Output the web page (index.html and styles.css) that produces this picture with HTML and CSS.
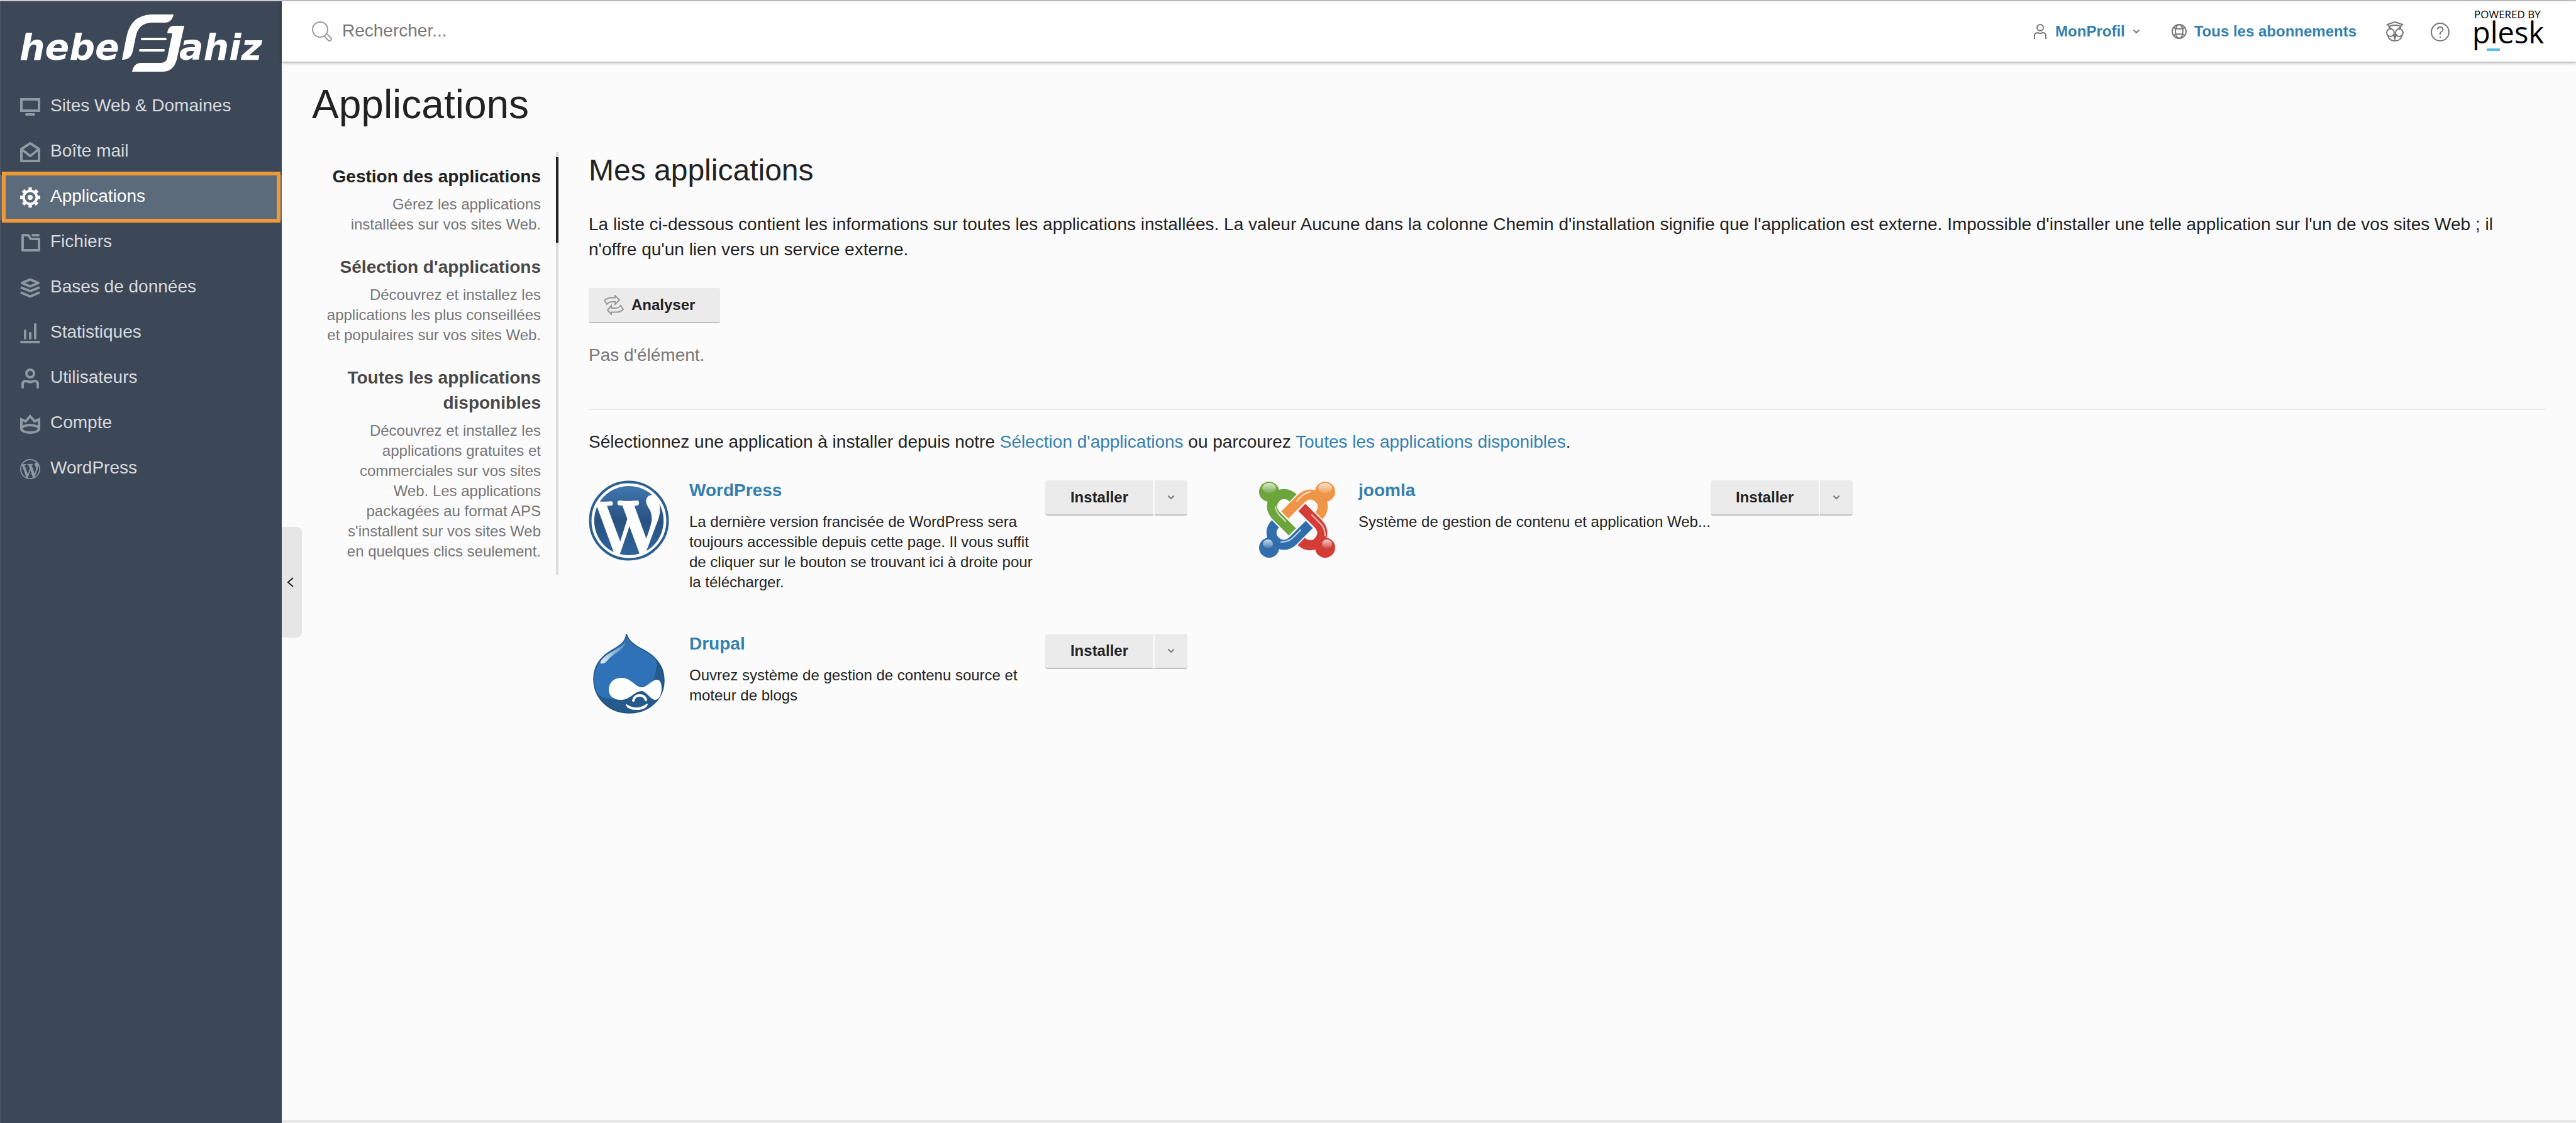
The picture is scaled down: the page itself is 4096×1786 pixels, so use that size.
FILE: index.html
```html
<!DOCTYPE html>
<html lang="fr">
<head>
  <meta charset="UTF-8">
  <title>Applications</title>
  <link rel="stylesheet" href="styles.css">
</head>
<body>
  <div class="page">
    <aside class="sidebar">
      <a class="brand" href="#">
        <svg width="448" height="132" viewBox="0 2 448 132" fill="#fff">
          <text class="brand-text" x="31" y="95">hebe</text>
          <text class="brand-text" x="285" y="95">ahiz</text>
          <path d="M194 95 L201 59 Q208 24 241 23 H276 Q273 36 262 36 H241 Q220 37 216 58 L211 82 Q208 95 194 95z"/>
          <path d="M277 41 H293 L281 95 Q276 113 260 114 H210 Q213 100 224 100 H256 Q264 100 266 92 L274 53 H266 Q267 41 277 41z"/>
          <rect x="224" y="60" width="41" height="4" rx="2"/>
          <rect x="221" y="78" width="41" height="4" rx="2"/>
        </svg>
      </a>
      <nav class="menu">
        <a class="menu-item" href="#">
          <svg class="icon" viewBox="0 0 32 32"><rect x="2" y="4" width="28" height="18"/><path d="M10 28h12" stroke-linecap="round"/></svg>
          <span>Sites Web &amp; Domaines</span>
        </a>
        <a class="menu-item" href="#">
          <svg class="icon" viewBox="0 0 32 32"><path d="M2 11 L16 2 L30 11 V30 H2z" stroke-linejoin="round"/><path d="M3 12 L16 22 L29 12"/></svg>
          <span>Boîte mail</span>
        </a>
        <a class="menu-item active" href="#">
          <svg class="icon" viewBox="0 0 32 32"><circle cx="16" cy="16" r="10.5"/><circle cx="16" cy="16" r="13.5" stroke-width="5" pathLength="80" stroke-dasharray="5 5" stroke-dashoffset="2.5"/><circle class="solid" cx="16" cy="16" r="4"/></svg>
          <span>Applications</span>
        </a>
        <a class="menu-item" href="#">
          <svg class="icon" viewBox="0 0 32 32"><path d="M4 4 H13 L17 10 H30 V28 H4z" stroke-linejoin="round"/><path d="M20 4h9" stroke-linecap="round"/></svg>
          <span>Fichiers</span>
        </a>
        <a class="menu-item" href="#">
          <svg class="icon" viewBox="0 0 32 32" stroke-linejoin="round"><path d="M3 8 L16 2.500 L29 8 L16 13.500z"/><path d="M1 15 L16 21 L31 15"/><path d="M1 23 L16 29.500 L31 23"/></svg>
          <span>Bases de données</span>
        </a>
        <a class="menu-item" href="#">
          <svg class="icon" viewBox="0 0 32 32" stroke-linecap="round"><path d="M2 30H30M8 12V24M16 16V24M24 2V24"/></svg>
          <span>Statistiques</span>
        </a>
        <a class="menu-item" href="#">
          <svg class="icon" viewBox="0 0 32 32" stroke-linecap="round"><circle cx="16" cy="8" r="6"/><path d="M4 30V25Q4 20 9 20Q11 20 13 21Q16 22 19 21Q21 20 23 20Q28 20 28 25V30"/></svg>
          <span>Utilisateurs</span>
        </a>
        <a class="menu-item" href="#">
          <svg class="icon" viewBox="0 0 32 32"><path d="M2 24V9L9 12L16 4L23 12L30 9V24"/><ellipse cx="16" cy="24" rx="14" ry="6"/></svg>
          <span>Compte</span>
        </a>
        <a class="menu-item" href="#">
          <svg class="icon" viewBox="0 0 20 20"><path class="solid" fill-rule="evenodd" d="M20 10c0-5.510-4.490-10-10-10C4.480 0 0 4.490 0 10c0 5.520 4.480 10 10 10 5.510 0 10-4.480 10-10zM7.780 15.370L4.370 6.220c.55-.02 1.170-.08 1.170-.08.5-.06.44-1.130-.06-1.110 0 0-1.450.11-2.370.11-.18 0-.37 0-.58-.01C4.120 2.690 6.870 1.110 10 1.110c2.330 0 4.450.87 6.050 2.340-.68-.11-1.650.39-1.650 1.580 0 .74.45 1.360.9 2.100.35.61.55 1.360.55 2.460 0 1.490-1.400 5-1.400 5l-3.030-8.370c.54-.02.82-.17.82-.17.5-.05.44-1.250-.06-1.220 0 0-1.440.12-2.380.12-.87 0-2.330-.12-2.330-.12-.5-.03-.56 1.200-.06 1.220l.92.08 1.260 3.410zM17.410 10c.24-.64.74-1.870.43-4.250.7 1.290 1.050 2.710 1.050 4.250 0 3.290-1.730 6.240-4.400 7.780.97-2.590 1.940-5.200 2.920-7.780zM6.100 18.090C3.120 16.650 1.110 13.530 1.110 10c0-1.300.23-2.480.72-3.590C3.250 10.300 4.670 14.200 6.100 18.090zm4.030-6.630l2.580 6.980c-.86.29-1.760.45-2.710.45-.79 0-1.570-.11-2.290-.33.81-2.380 1.620-4.740 2.420-7.100z"/></svg>
          <span>WordPress</span>
        </a>
      </nav>
    </aside>

    <div class="main">
      <button class="collapse" aria-label="Réduire le menu">
        <svg width="12" height="18" viewBox="0 0 12 18"><path d="M10 2L2 9l8 7"/></svg>
      </button>

      <header class="topbar">
        <label class="search">
          <svg class="line-icon search-icon" width="32" height="32" viewBox="0 0 32 32"><circle cx="13" cy="13" r="12"/><path d="M20 24l6 6q2 2 4 0t0-4l-6-6"/></svg>
          <input type="text" placeholder="Rechercher..." aria-label="Rechercher">
        </label>
        <div class="account">
          <a class="top-link" href="#">
            <svg class="line-icon" width="24" height="24" viewBox="0 0 24 24"><circle cx="12" cy="6" r="5"/><path d="M3 24V19Q3 14 8 14Q12 16 16 14Q21 14 21 19V24"/></svg>
            MonProfil
            <svg class="line-icon" width="12" height="8" viewBox="0 0 12 8"><path d="M1.500 1.500L6 6l4.500-4.500"/></svg>
          </a>
          <a class="top-link" href="#">
            <svg class="line-icon" width="24" height="24" viewBox="0 0 24 24"><circle cx="12" cy="12" r="11"/><ellipse cx="12" cy="12" rx="6" ry="11"/><path d="M3 6Q12 10 21 6M3 18Q12 14 21 18"/></svg>
            Tous les abonnements
          </a>
          <a class="top-icon" href="#" aria-label="Conseiller">
            <svg class="line-icon" width="32" height="32" viewBox="0 0 32 32"><path d="M4 5L16 1l12 4-3 3Q16 4 7 8z"/><path d="M7 8V13M25 8V13M7 9l5 4M25 9l-5 4"/><circle cx="9" cy="18" r="6"/><circle cx="23" cy="18" r="6"/><path d="M5 23Q7 31 16 31T27 23"/><path d="M14 21h4l-2 7z" fill="#777"/></svg>
          </a>
          <a class="top-icon" href="#" aria-label="Aide">
            <svg class="line-icon" width="32" height="32" viewBox="0 0 32 32"><circle cx="16" cy="17" r="14"/><path d="M12 13Q12 9 16 9T20.500 13Q20.500 15 18 16.500T16 20V21M16 24V26"/></svg>
          </a>
          <a class="plesk" href="#" aria-label="Plesk">
            <svg width="124" height="96" viewBox="0 2 124 96">
              <text class="powered" x="6" y="29">POWERED BY</text>
              <text class="plesk-name" x="3" y="69">plesk</text>
              <rect x="26" y="77" width="21" height="4" fill="#5bbee6"/>
            </svg>
          </a>
        </div>
      </header>

      <main class="content">
        <h1>Applications</h1>
        <div class="columns">
          <nav class="tabs">
            <a class="tab current" href="#">
              <strong>Gestion des applications</strong>
              <span>Gérez les applications installées sur vos sites Web.</span>
            </a>
            <a class="tab" href="#">
              <strong>Sélection d'applications</strong>
              <span>Découvrez et installez les applications les plus conseillées et populaires sur vos sites Web.</span>
            </a>
            <a class="tab" href="#">
              <strong>Toutes les applications disponibles</strong>
              <span>Découvrez et installez les applications gratuites et commerciales sur vos sites Web. Les applications packagées au format APS s'installent sur vos sites Web en&nbsp;quelques clics seulement.</span>
            </a>
          </nav>

          <section class="apps">
            <h2>Mes applications</h2>
            <p class="intro">La liste ci-dessous contient les informations sur toutes les applications installées. La valeur Aucune dans la colonne Chemin d'installation signifie que l'application est externe. Impossible d'installer une telle application sur l'un de vos sites Web ; il n'offre qu'un lien vers un service externe.</p>
            <button class="btn scan">
              <svg width="32" height="32" viewBox="0 0 32 32"><path d="M5 15L1 9Q6 4 13 4.500H18V1L25 8L18 15V11H13Q8 11 5 15z"/><path d="M27 17L31 23Q26 28 19 27.500H12V31L6 24L12 17V21H19Q24 21 27 17z"/></svg>
              Analyser
            </button>
            <p class="empty">Pas d'élément.</p>
            <hr>
            <p class="hint">Sélectionnez une application à installer depuis notre <a href="#">Sélection d'applications</a> ou parcourez <a href="#">Toutes les applications disponibles</a>.</p>

            <div class="app-grid">
              <article class="app">
                <svg class="app-logo" viewBox="0 0 128 128">
                  <defs>
                    <linearGradient id="wp" x1="0" y1="0" x2="0" y2="1">
                      <stop offset="0" stop-color="#3f77b0"/>
                      <stop offset=".5" stop-color="#28517f"/>
                      <stop offset="1" stop-color="#2f659c"/>
                    </linearGradient>
                  </defs>
                  <circle cx="64" cy="64" r="61.500" fill="#fff" stroke="#2c5f90" stroke-width="4"/>
                  <path transform="translate(2 2) scale(6.200)" fill="url(#wp)" d="M7.780 15.370L4.370 6.220c.55-.02 1.170-.08 1.170-.08.5-.06.44-1.130-.06-1.110 0 0-1.450.11-2.370.11-.18 0-.37 0-.58-.01C4.120 2.690 6.870 1.110 10 1.110c2.330 0 4.450.87 6.050 2.340-.68-.11-1.650.39-1.650 1.580 0 .74.45 1.360.9 2.100.35.61.55 1.360.55 2.460 0 1.490-1.400 5-1.400 5l-3.030-8.370c.54-.02.82-.17.82-.17.5-.05.44-1.250-.06-1.220 0 0-1.440.12-2.380.12-.87 0-2.330-.12-2.330-.12-.5-.03-.56 1.200-.06 1.220l.92.08 1.260 3.410zM17.410 10c.24-.64.74-1.870.43-4.250.7 1.290 1.050 2.710 1.050 4.250 0 3.290-1.730 6.240-4.400 7.780.97-2.590 1.940-5.200 2.920-7.780zM6.100 18.090C3.120 16.650 1.110 13.530 1.110 10c0-1.300.23-2.480.72-3.590C3.250 10.300 4.670 14.200 6.100 18.090zm4.030-6.630l2.580 6.980c-.86.29-1.760.45-2.710.45-.79 0-1.570-.11-2.290-.33.81-2.380 1.620-4.740 2.420-7.100z"/>
                </svg>
                <div class="app-info">
                  <a class="app-name" href="#">WordPress</a>
                  <p>La dernière version francisée de WordPress sera toujours accessible depuis cette page. Il vous suffit de cliquer sur le bouton se trouvant ici à droite pour la télécharger.</p>
                </div>
                <div class="split">
                  <button class="btn">Installer</button>
                  <button class="btn more" aria-label="Plus d'options"><svg width="12" height="8" viewBox="0 0 12 8"><path d="M1.500 1.500L6 6l4.500-4.500"/></svg></button>
                </div>
              </article>

              <article class="app">
                <svg class="app-logo" viewBox="0 0 128 128">
                  <defs>
                    <linearGradient id="shine" x1="0" y1="0" x2="0" y2="1">
                      <stop offset="0" stop-color="#fff" stop-opacity=".75"/>
                      <stop offset="1" stop-color="#fff" stop-opacity=".1"/>
                    </linearGradient>
                    <g id="limb">
                      <path d="M56 28C48 20 37 20 30 26C21 35 19 46 30 57L55 82" fill="none" stroke="currentColor" stroke-width="16"/>
                      <circle cx="18" cy="18" r="16" fill="currentColor"/>
                    </g>
                  </defs>
                  <use href="#limb" color="#6da43c"/>
                  <use href="#limb" color="#ef9548" transform="rotate(90 62.500 62.500)"/>
                  <use href="#limb" color="#d33d35" transform="rotate(180 62.500 62.500)"/>
                  <use href="#limb" color="#316fac" transform="rotate(270 62.500 62.500)"/>
                  <g fill="none" stroke="#fff" stroke-width="2" stroke-linecap="round" opacity=".7">
                    <path d="M28 42Q29 50 36 57L44 65"/>
                    <path d="M62 33Q72 20 84 18"/>
                    <path d="M86 55L100 69Q107 76 107 88"/>
                    <path d="M37 98Q49 98 56 91L68 79"/>
                  </g>
                  <g fill="url(#shine)">
                    <ellipse cx="18" cy="12" rx="11" ry="8"/>
                    <ellipse cx="107" cy="12" rx="11" ry="8"/>
                    <ellipse cx="16" cy="101" rx="8" ry="7"/>
                    <ellipse cx="110" cy="101" rx="8" ry="7"/>
                  </g>
                </svg>
                <div class="app-info">
                  <a class="app-name" href="#">joomla</a>
                  <p>Système de gestion de contenu et application Web...</p>
                </div>
                <div class="split">
                  <button class="btn">Installer</button>
                  <button class="btn more" aria-label="Plus d'options"><svg width="12" height="8" viewBox="0 0 12 8"><path d="M1.500 1.500L6 6l4.500-4.500"/></svg></button>
                </div>
              </article>

              <article class="app">
                <svg class="app-logo" viewBox="0 0 128 128">
                  <defs>
                    <linearGradient id="gloss" x1="1" y1="0" x2="0" y2="1">
                      <stop offset="0" stop-color="#fff" stop-opacity=".1"/>
                      <stop offset="1" stop-color="#fff" stop-opacity=".9"/>
                    </linearGradient>
                  </defs>
                  <path d="M60 0C63 12 74 19 88 26C108 37 120 52 120 74C120 104 96 126 65 126C33 126 8 103 8 72C8 52 18 38 34 28C49 19 59 14 60 0z" fill="#2f72b8"/>
                  <path d="M107 40C115 49 120 60 120 74C120 104 96 126 65 126C38 126 17 111 10 88C16 105 34 103 46 103C62 103 73 82 90 83C103 83 111 56 107 40z" fill="#245a8c"/>
                  <path d="M60 0C63 12 74 19 88 26C108 37 120 52 120 74C120 104 96 126 65 126C33 126 8 103 8 72C8 52 18 38 34 28C49 19 59 14 60 0z" fill="none" stroke="#22527f" stroke-width="1.500"/>
                  <path d="M58 11C59 25 46 26 32 40Q25 49 19 47C17 44 26 34 38 28C48 22 56 18 58 11z" fill="url(#gloss)"/>
                  <path d="M32 89C32 77 41 70 52 70C68 70 74 85 84 85C93 85 101 73 108 73C114 73 116 79 116 87C116 96 112 105 106 105C98 105 92 91 84 91C73 91 66 105 51 105C40 105 32 99 32 89z" fill="#fff"/>
                  <path d="M71 106Q73 98 81 98T91 105" fill="none" stroke="#fff" stroke-width="4" stroke-linecap="round"/>
                  <path d="M60 113Q77 124 93 112Q91 120 77 120T60 113z" fill="#fff" stroke="#fff" stroke-width="2" stroke-linejoin="round"/>
                </svg>
                <div class="app-info">
                  <a class="app-name" href="#">Drupal</a>
                  <p>Ouvrez système de gestion de contenu source et moteur de blogs</p>
                </div>
                <div class="split">
                  <button class="btn">Installer</button>
                  <button class="btn more" aria-label="Plus d'options"><svg width="12" height="8" viewBox="0 0 12 8"><path d="M1.500 1.500L6 6l4.500-4.500"/></svg></button>
                </div>
              </article>
            </div>
          </section>
        </div>
      </main>

      <footer class="footer"></footer>
    </div>
  </div>
</body>
</html>
```
FILE: styles.css
```css
* {
  box-sizing: border-box;
}
body {
  margin: 0;
  font-family: "Liberation Sans", Arial, sans-serif;
  font-size: 28px;
  line-height: 40px;
  color: #222;
  background: #fbfbfb;
}
a {
  color: #337fb0;
  text-decoration: none;
}
h1, h2, p {
  margin: 0;
  font-weight: normal;
}
svg {
  display: block;
  flex: none;
}
button {
  font: inherit;
  border: none;
  cursor: pointer;
}
.page {
  display: flex;
  min-height: 100vh;
  border-top: 2px solid #ccc;
}

/* Sidebar */
.sidebar {
  flex: 0 0 448px;
  background: #3c4858;
  border-left: 1px solid #4d5967;
}
.brand {
  display: block;
  margin-left: -1px;
}
.brand-text {
  font-family: "DejaVu Sans", sans-serif;
  font-size: 57px;
  font-weight: bold;
  font-style: italic;
}
.menu {
  margin-left: -1px;
}
.menu-item {
  position: relative;
  display: flex;
  align-items: center;
  gap: 16px;
  height: 72px;
  padding-left: 32px;
  color: #d8dade;
}
.menu-item span {
  padding-bottom: 4px;
}
.icon {
  width: 32px;
  height: 32px;
  fill: none;
  stroke: #9098a2;
  stroke-width: 4;
}
.icon .solid {
  fill: #9098a2;
  stroke: none;
}
.menu-item.active {
  background: #5b6b7c;
  color: #fff;
}
.active .icon {
  stroke: #fff;
}
.active .icon .solid {
  fill: #fff;
}
.menu-item.active::after {
  content: "";
  position: absolute;
  inset: -5px 2px -4px 3px;
  border: 6px solid #ef9836;
}

/* Main area */
.main {
  position: relative;
  flex: 1;
  min-width: 0;
  display: flex;
  flex-direction: column;
}
.collapse {
  position: absolute;
  left: 0;
  top: 836px;
  display: flex;
  align-items: center;
  width: 32px;
  height: 176px;
  padding: 0 8px;
  background: #e6e6e6;
  border-radius: 0 8px 8px 0;
}
.collapse svg {
  fill: none;
  stroke: #222;
  stroke-width: 2;
}
.topbar {
  display: flex;
  align-items: center;
  justify-content: space-between;
  height: 96px;
  padding: 0 44px 0 48px;
  background: #fff;
  box-shadow: 0 1px 5px rgba(0, 0, 0, .45);
}
.search {
  display: flex;
  align-items: center;
  gap: 16px;
}
.search input {
  width: 600px;
  padding: 0 0 2px;
  border: none;
  outline: none;
  background: none;
  font: inherit;
  color: #222;
}
.search input::placeholder {
  color: #777;
  opacity: 1;
}
.line-icon {
  fill: none;
  stroke: #777;
  stroke-width: 2;
}
.search-icon {
  stroke: #999;
}
.account {
  display: flex;
  align-items: center;
  gap: 40px;
}
.top-link {
  display: flex;
  align-items: center;
  gap: 12px;
  padding: 0 5px;
  font-size: 24px;
  font-weight: bold;
}
.plesk {
  margin-left: -8px;
}
.powered {
  font-family: "Open Sans", sans-serif;
  font-size: 17px;
}
.plesk-name {
  font-family: "Open Sans", sans-serif;
  font-size: 47px;
}

/* Content */
.content {
  flex: 1;
  padding: 30px 48px;
}
h1 {
  font-size: 64px;
  line-height: 76px;
}
.columns {
  display: flex;
  align-items: flex-start;
  gap: 48px;
  margin-top: 38px;
}
.tabs {
  flex: 0 0 392px;
  display: flex;
  flex-direction: column;
  gap: 8px;
  padding: 8px 0;
  box-shadow: inset -4px 0 #ddd;
  text-align: right;
}
.tab {
  padding: 11px 24px 13px 22px;
  border-right: 4px solid transparent;
}
.tab.current {
  border-color: #222;
}
.tab strong {
  display: block;
  margin-bottom: 8px;
  color: #484848;
}
.tab.current strong {
  color: #222;
}
.tab span {
  display: block;
  font-size: 24px;
  line-height: 32px;
  color: #767676;
}
.apps {
  flex: 1;
  min-width: 0;
  padding-top: 1px;
}
h2 {
  font-size: 48px;
  line-height: 56px;
}
.intro {
  margin: 38px 0 41px;
}
.btn {
  display: flex;
  align-items: center;
  height: 56px;
  padding: 0 40px;
  background: #ebebeb;
  border-bottom: 2px solid #bfbfbf;
  border-radius: 4px;
  font-size: 24px;
  font-weight: bold;
  color: #222;
}
.btn svg {
  fill: none;
  stroke: #777;
  stroke-width: 2;
}
.scan {
  gap: 12px;
  padding-left: 24px;
}
.scan svg {
  stroke: #999;
}
.empty {
  margin: 31px 0 65px;
  color: #777;
}
hr {
  height: 2px;
  margin: 0;
  border: none;
  background: #ebebeb;
}
.hint {
  margin: 31px 0 41px;
}
.app-grid {
  display: grid;
  grid-template-columns: minmax(0, 952px) minmax(0, 946px);
  gap: 66px 112px;
}
.app {
  display: flex;
  align-items: flex-start;
}
.app-logo {
  width: 128px;
  height: 128px;
}
.app-info {
  flex: 1;
  padding-left: 32px;
}
.app-name {
  display: block;
  line-height: 32px;
  font-weight: bold;
}
.app-info p {
  margin-top: 18px;
  font-size: 24px;
  line-height: 32px;
}
.split {
  display: flex;
  gap: 2px;
}
.split .btn:first-child {
  border-radius: 4px 0 0 4px;
}
.split .more {
  padding: 0 20px;
  border-radius: 0 4px 4px 0;
}
.footer {
  height: 4px;
  background: #f5f5f5;
  border-top: 2px solid #ddd;
}
```
